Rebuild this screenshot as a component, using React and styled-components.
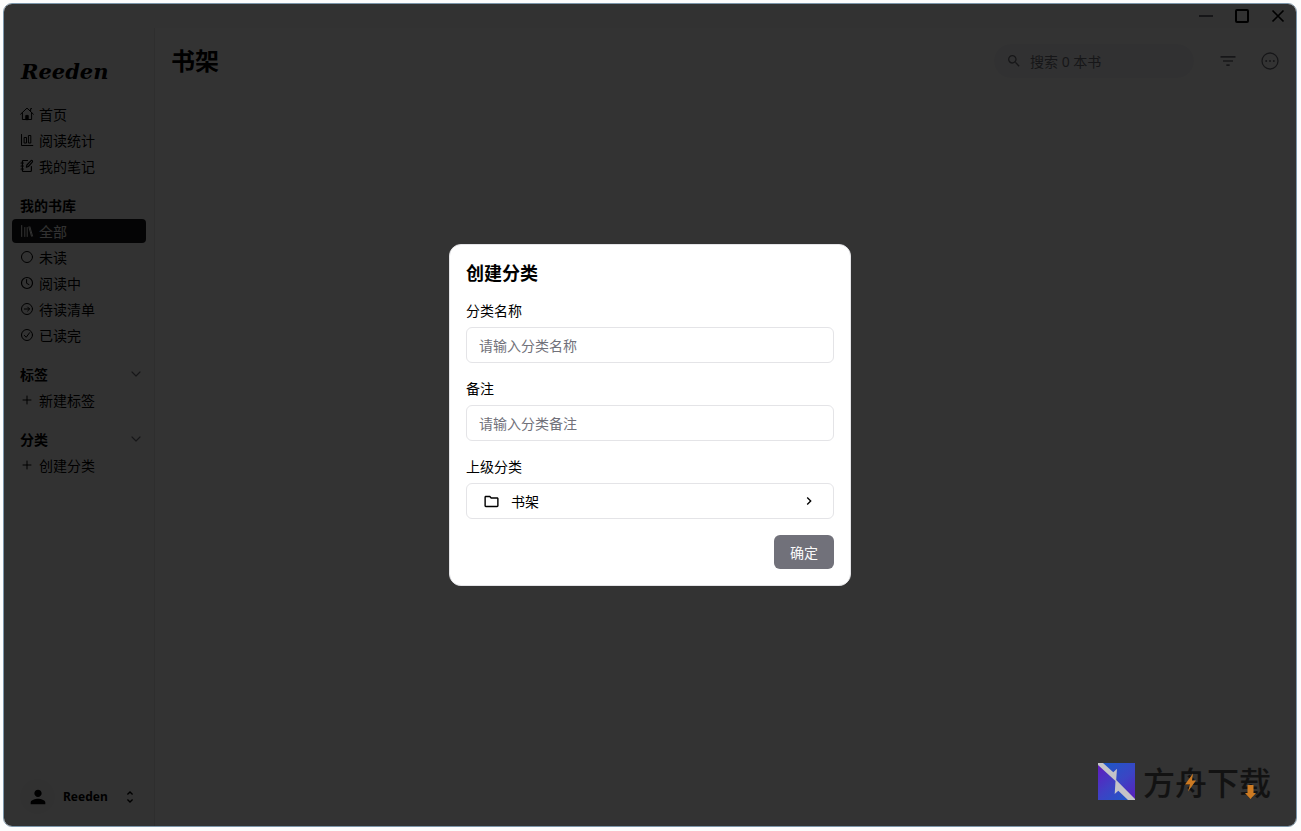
import React, { useState } from "react";
import styled, { createGlobalStyle } from "styled-components";
import {
    MdPerson,
    MdUnfoldMore,
    MdSearch,
    MdFilterList,
    MdOutlineFolder,
    MdChevronRight,
} from "react-icons/md";

const GlobalStyle = createGlobalStyle`
    * {
        box-sizing: border-box;
    }
    body {
        margin: 0;
        background-color: #fdfdfd;
        color: #000000;
        font-family: "Noto Sans", "Noto Sans CJK SC", sans-serif;
        font-size: 14px;
    }
    button, input {
        font: inherit;
        color: inherit;
    }
    button {
        padding: 0;
        border: none;
        background: none;
        cursor: pointer;
    }
    svg {
        display: block;
        flex: none;
    }
`

const StyledDesktop = styled.div`
    display: flex;
    min-height: 100vh;
    padding: 3px 4px 4px 3px;
`

const StyledWindow = styled.div`
    position: relative;
    flex: 1;
    display: flex;
    flex-direction: column;
    overflow: hidden;
    border: 1px solid #7d97ab;
    border-radius: 9px;
    background-color: #ffffff;
`

const StyledTitleBar = styled.header`
    display: flex;
    justify-content: flex-end;
    align-items: center;
    gap: 20px;
    height: 24px;
    padding: 0 10px;
    background-color: #fafafa;
`

const StyledBody = styled.div`
    flex: 1;
    display: flex;
`

const StyledSidebar = styled.aside`
    display: flex;
    flex-direction: column;
    width: 151px;
    padding: 0 8px 12px;
    border-right: 1px solid #e4e4e7;
    background-color: #fafafa;
`

const StyledLogo = styled.div`
    padding: 28px 9px 14px;
    font-family: "DejaVu Serif", serif;
    font-size: 21px;
    font-style: italic;
    font-weight: bold;
    line-height: 32px;
`

const StyledNav = styled.nav`
    display: flex;
    flex-direction: column;
    gap: 15px;
`

const StyledSection = styled.section`
    display: flex;
    flex-direction: column;
    gap: 2px;
`

const StyledSectionTitle = styled.h2`
    display: flex;
    align-items: center;
    justify-content: space-between;
    height: 24px;
    margin: 0;
    padding: 0 4px 0 8px;
    font-size: 14px;
    font-weight: bold;
`

const StyledNavItem = styled.button`
    display: flex;
    align-items: center;
    gap: 5px;
    height: 24px;
    padding: 0 8px;
    border-radius: 4px;
    text-align: left;
    background-color: ${({ $active }) => ($active ? "#18181b" : "transparent")};
    color: ${({ $active }) => ($active ? "#fafafa" : "#000000")};
`

const StyledUser = styled.button`
    display: flex;
    align-items: center;
    margin-top: auto;
    padding: 0 8px;
    font-size: 12px;
    font-weight: bold;

    > svg {
        margin-left: 14px;
    }
`

const StyledAvatar = styled.span`
    display: flex;
    align-items: center;
    justify-content: center;
    width: 35px;
    height: 35px;
    margin-right: 8px;
    border-radius: 50%;
    background-color: #f4f4f5;
`

const StyledMain = styled.main`
    flex: 1;
`

const StyledToolbar = styled.div`
    display: flex;
    align-items: center;
    padding: 16px;
    color: #71717a;
`

const StyledPageTitle = styled.h1`
    margin: 0;
    flex: 1;
    font-size: 24px;
    line-height: 34px;
    color: #000000;
`

const StyledSearch = styled.label`
    display: flex;
    align-items: center;
    gap: 8px;
    width: 200px;
    height: 34px;
    margin-right: 24px;
    padding: 0 12px;
    border-radius: 17px;
    background-color: #f6f6f7;

    input {
        flex: 1;
        min-width: 0;
        padding: 0;
        border: none;
        outline: none;
        background: none;
    }
    input::placeholder {
        color: #71717a;
        opacity: 1;
    }
`

const StyledToolButtons = styled.div`
    display: flex;
    align-items: center;
    gap: 22px;
`

const StyledOverlay = styled.div`
    position: absolute;
    inset: 0;
    display: flex;
    align-items: center;
    justify-content: center;
    background-color: rgba(0, 0, 0, 0.8);
`

const StyledDialog = styled.form`
    display: flex;
    flex-direction: column;
    gap: 16px;
    width: 402px;
    padding: 16px;
    border: 1px solid #e4e4e7;
    border-radius: 12px;
    background-color: #ffffff;
`

const StyledDialogTitle = styled.h2`
    margin: 0;
    font-size: 18px;
    line-height: 24px;
`

const StyledField = styled.div`
    display: flex;
    flex-direction: column;
    gap: 6px;

    label {
        line-height: 20px;
    }
`

const StyledInput = styled.input`
    height: 36px;
    padding: 0 12px;
    border: 1px solid #e4e4e7;
    border-radius: 6px;
    background-color: #ffffff;

    &::placeholder {
        color: #71717a;
        opacity: 1;
    }
`

const StyledPicker = styled.button`
    display: flex;
    align-items: center;
    gap: 11px;
    height: 36px;
    padding: 0 16px;
    border: 1px solid #e4e4e7;
    border-radius: 6px;

    span {
        flex: 1;
        text-align: left;
    }
`

const StyledSubmit = styled.button`
    align-self: flex-end;
    width: 60px;
    height: 34px;
    border-radius: 6px;
    background-color: #71717a;
    color: #fafafa;
`

const StyledWatermark = styled.div`
    position: absolute;
    right: 25px;
    bottom: 23px;
    display: flex;
    align-items: center;
    gap: 8px;
    font-family: "Noto Sans CJK SC", sans-serif;
    font-size: 32px;
    font-weight: 500;
    line-height: 44px;
    color: #121212;
`

const StyledWordmark = styled.span`
    position: relative;

    svg {
        position: absolute;
        left: 0;
        top: 0;
    }
`

const Icon = ({ size = 14, box = 14, width = 1, children }) => (
    <svg
        width={size}
        height={size}
        viewBox={`0 0 ${box} ${box}`}
        fill="none"
        stroke="currentColor"
        strokeWidth={width}
        strokeLinecap="round"
        strokeLinejoin="round"
        aria-hidden="true"
    >
        {children}
    </svg>
)

const icons = {
    home: (
        <>
            <path d="M.6 7.2 7 1.1l6.4 6.1M2.4 5.7v6.8h9.2V5.7M10.6 4V1.6h1" />
            <path d="M5.8 12.3V8.4h2.4v3.9z" fill="currentColor" />
        </>
    ),
    stats: (
        <path d="M1.5 1.5v11h11.3M4.5 4.5h2v5.5h-2zM8.8 2.5h2V10h-2z" />
    ),
    notes: (
        <path
            d="M7.5 1.5H3.4a1 1 0 0 0-1 1v9a1 1 0 0 0 1 1h7a1 1 0 0 0 1-1V7.5M1 4h2.4M1 7h2.4M1 10h2.4M6.4 8.2l.5-2.2 4.2-4.4q.9-.4 1.4.4.2.6-.2 1.1L8.4 7.5z"
            strokeWidth="1.2"
        />
    ),
    library: <path d="M1.7 1.5v11M4.8 3.5v9M7.2 3.5v9M8.9 3l2.6 9.2M9.9 2.8l2.6 9.2" />,
    circle: <circle cx="7" cy="7" r="5.5" />,
    clock: (
        <>
            <circle cx="7" cy="7" r="5.5" strokeWidth="1.2" />
            <path d="M6.6 3.6v3.7L9 8.6" />
        </>
    ),
    arrow: (
        <>
            <circle cx="7" cy="7" r="5.5" />
            <path d="M4.3 7h5.2M7.6 5l2 2-2 2" />
        </>
    ),
    check: (
        <>
            <circle cx="7" cy="7" r="5.5" />
            <path d="m4.4 7.4 1.8 1.9 3.4-4.6" />
        </>
    ),
    plus: <path d="M7 3v8M3 7h8" />,
}

const sections = [
    {
        items: [
            { icon: "home", text: "首页" },
            { icon: "stats", text: "阅读统计" },
            { icon: "notes", text: "我的笔记" },
        ],
    },
    {
        title: "我的书库",
        items: [
            { icon: "library", text: "全部" },
            { icon: "circle", text: "未读" },
            { icon: "clock", text: "阅读中" },
            { icon: "arrow", text: "待读清单" },
            { icon: "check", text: "已读完" },
        ],
    },
    { title: "标签", folds: true, items: [{ icon: "plus", text: "新建标签" }] },
    { title: "分类", folds: true, items: [{ icon: "plus", text: "创建分类" }] },
]

function Sidebar() {
    const [active, setActive] = useState("全部");

    return (
        <StyledSidebar>
            <StyledLogo>Reeden</StyledLogo>
            <StyledNav>
                {sections.map((section, index) => (
                    <StyledSection key={index}>
                        {section.title && (
                            <StyledSectionTitle>
                                {section.title}
                                {section.folds && (
                                    <Icon size={12} box={12} width={1.2}>
                                        <path d="m2 4 4 4 4-4" stroke="#71717a" />
                                    </Icon>
                                )}
                            </StyledSectionTitle>
                        )}
                        {section.items.map((item) => (
                            <StyledNavItem
                                key={item.text}
                                type="button"
                                $active={item.text === active}
                                onClick={() => { setActive(item.text) }}
                            >
                                <Icon>{icons[item.icon]}</Icon>
                                {item.text}
                            </StyledNavItem>
                        ))}
                    </StyledSection>
                ))}
            </StyledNav>
            <StyledUser type="button">
                <StyledAvatar><MdPerson size={22} /></StyledAvatar>
                Reeden
                <MdUnfoldMore size={16} />
            </StyledUser>
        </StyledSidebar>
    )
}

function Watermark() {
    return (
        <StyledWatermark>
            <svg width="37" height="37" viewBox="0 0 37 37" aria-hidden="true">
                <defs>
                    <linearGradient id="upper" x1="0.2" y1="0" x2="1" y2="1">
                        <stop offset="0" stopColor="#1f58c8" />
                        <stop offset="0.5" stopColor="#3a45c4" />
                        <stop offset="1" stopColor="#5c1cbc" />
                    </linearGradient>
                    <linearGradient id="lower" x1="0" y1="0.1" x2="0.8" y2="1">
                        <stop offset="0" stopColor="#5f1cbe" />
                        <stop offset="0.5" stopColor="#3f40c4" />
                        <stop offset="1" stopColor="#1f58c8" />
                    </linearGradient>
                </defs>
                <path d="M0 0h37v37z" fill="url(#upper)" />
                <path d="M0 0v37h37z" fill="url(#lower)" />
                <path
                    d="M0 0h5l10.3 9.3L19 5.7 18.2 17 37 36v1h-7l-9.7-9.3-3.6 3.3.8-13L0 2z"
                    fill="#c4c4c8"
                />
            </svg>
            <StyledWordmark>
                方舟下载
                <svg width="128" height="44" viewBox="0 0 128 44" fill="#cc7a22" aria-hidden="true">
                    <path d="M50 14.500 42 25.500h5l-2 7 8-11h-4z" />
                    <path d="M104.500 26h6v8h2.500l-5.500 6-5.500-6h2.500z" />
                </svg>
            </StyledWordmark>
        </StyledWatermark>
    )
}

function CategoryDialog() {
    const [name, setName] = useState("");
    const [remark, setRemark] = useState("");

    return (
        <StyledDialog
            role="dialog"
            aria-labelledby="dialog-title"
            onSubmit={(e) => { e.preventDefault() }}
        >
            <StyledDialogTitle id="dialog-title">创建分类</StyledDialogTitle>
            <StyledField>
                <label htmlFor="name">分类名称</label>
                <StyledInput
                    id="name"
                    placeholder="请输入分类名称"
                    value={name}
                    onChange={(e) => { setName(e.target.value) }}
                />
            </StyledField>
            <StyledField>
                <label htmlFor="remark">备注</label>
                <StyledInput
                    id="remark"
                    placeholder="请输入分类备注"
                    value={remark}
                    onChange={(e) => { setRemark(e.target.value) }}
                />
            </StyledField>
            <StyledField>
                <label htmlFor="parent">上级分类</label>
                <StyledPicker id="parent" type="button">
                    <MdOutlineFolder size={17} />
                    <span>书架</span>
                    <MdChevronRight size={16} />
                </StyledPicker>
            </StyledField>
            <StyledSubmit type="submit">确定</StyledSubmit>
        </StyledDialog>
    )
}

function App() {
    return (
        <>
            <GlobalStyle />
            <StyledDesktop>
                <StyledWindow>
                    <StyledTitleBar>
                        <button type="button" aria-label="最小化">
                            <Icon size={16} box={16} width={2}>
                                <path d="M1 8h14" stroke="#71717a" strokeLinecap="butt" />
                            </Icon>
                        </button>
                        <button type="button" aria-label="最大化">
                            <Icon size={16} box={16} width={2}>
                                <rect x="2" y="2" width="12" height="12" rx="1" />
                            </Icon>
                        </button>
                        <button type="button" aria-label="关闭">
                            <Icon size={16} box={16} width={1.7}>
                                <path d="m2.5 2.5 11 11M13.5 2.5l-11 11" strokeLinecap="butt" />
                            </Icon>
                        </button>
                    </StyledTitleBar>
                    <StyledBody>
                        <Sidebar />
                        <StyledMain>
                            <StyledToolbar>
                                <StyledPageTitle>书架</StyledPageTitle>
                                <StyledSearch>
                                    <MdSearch size={16} />
                                    <input type="text" placeholder="搜索 0 本书" aria-label="搜索" />
                                </StyledSearch>
                                <StyledToolButtons>
                                    <button type="button" aria-label="筛选">
                                        <MdFilterList size={20} />
                                    </button>
                                    <button type="button" aria-label="更多">
                                        <Icon size={20} box={20} width={1.3}>
                                            <circle cx="10" cy="10" r="8" />
                                            <path d="M6.2 10h.01M10 10h.01M13.8 10h.01" strokeWidth="2" />
                                        </Icon>
                                    </button>
                                </StyledToolButtons>
                            </StyledToolbar>
                        </StyledMain>
                    </StyledBody>
                    <StyledOverlay>
                        <CategoryDialog />
                    </StyledOverlay>
                    <Watermark />
                </StyledWindow>
            </StyledDesktop>
        </>
    )
}

export default App
